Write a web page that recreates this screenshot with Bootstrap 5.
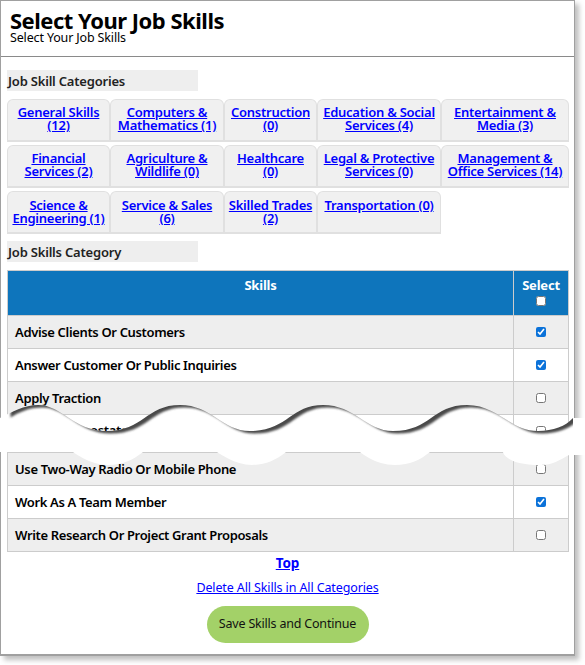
<!DOCTYPE html>
<html lang="en">
<head>
<meta charset="utf-8">
<title>Select Your Job Skills</title>
<link href="https://cdn.jsdelivr.net/npm/bootstrap@5.3.0/dist/css/bootstrap.min.css" rel="stylesheet">
<style>
html,body{background:#fff;overflow:hidden;height:665px}
body{font-family:"Noto Sans","Open Sans",sans-serif;color:#000;font-size:14px;position:relative}
.sheet{width:575px;height:656px;background:#fff;border:1px solid #a0a0a0;border-width:1px 1px 2px 1px;box-shadow:4px 4px 5px rgba(0,0,0,.25);overflow:hidden}
.head-box{height:56px;border-bottom:1px solid #8a8a8a;padding:7px 9px 0}
.page-title{font-size:22px;line-height:24px;font-weight:700;margin:0;letter-spacing:-.5px}
.page-sub{font-size:12.5px;line-height:12px;letter-spacing:-.15px}
.sec-label{width:191px;height:21px;background:#eee;font-size:13px;line-height:23px;font-weight:600;color:#222;padding-left:1px;margin-left:6px;letter-spacing:-.2px}
.first-label{margin-top:13px}
.second-label{margin-top:7px}
.tabs-box{display:grid;grid-template-columns:103px 114px 93px 124px 128px;margin:8px 0 0 6px;width:562px;row-gap:3px}
.tab-cell{background:#f0f0f0;border:1px solid #e0e0e0;border-bottom-width:2px;border-top-left-radius:6px;border-top-right-radius:6px;height:43px;text-align:center;font-size:13px;line-height:13px;font-weight:600;padding-top:6px;letter-spacing:-.25px}
.tab-cell:nth-child(n+11){padding-top:7px}
.tab-cell a{color:#00f}
.skill-table{width:562px;margin:8px 0 0 6px;border-collapse:collapse;table-layout:fixed}
.skill-table th,.skill-table td{border:1px solid #ccc;font-size:13px;font-weight:600}
.skill-table thead th{background:#0e75bc;color:#fff;height:45px;text-align:center;vertical-align:top;line-height:13px;padding-top:8px;font-weight:700;letter-spacing:-.2px}
.skill-table tbody td{height:33px;padding:2px 0 0 7px;vertical-align:middle;letter-spacing:-.35px}
.skill-table tbody tr:nth-child(odd) td{background:#eee}
.skill-table tbody td.pick{padding:0;text-align:center}
.skill-table .cut td{height:38px;padding:0 0 2px 7px;white-space:nowrap;overflow:hidden}
.skill-table .cut td.pick{padding:0 0 5px}
.sliver{display:inline-block}
.sliver-a{margin-left:10px;width:65px;vertical-align:-3px}
.sliver-b{width:78px}
.sliver-c{vertical-align:-3px}
.skill-table input{width:10px;height:10px;display:block;margin:0 auto;accent-color:#0b72d9}
.skill-table thead input{margin-top:4px}
.top-row{margin-top:2px;line-height:18px}
.del-row{margin-top:6px;line-height:18px}
.btn-row{margin-top:9px}
.top-link{font-weight:700;font-size:13.5px;color:#00f;letter-spacing:-.1px}
.del-link{color:#00f;font-size:12.5px;letter-spacing:-.12px}
.save-pill{background:#a3d168;color:#111;border:0;border-radius:19px;width:162px;height:37px;font-size:12.5px;letter-spacing:-.2px;padding:0}
.tear{position:absolute;left:0;top:400px;width:585px;height:72px}
</style>
</head>
<body>
<div class="sheet">
  <div class="head-box">
    <h1 class="page-title">Select Your Job Skills</h1>
    <div class="page-sub">Select Your Job Skills</div>
  </div>
  <div class="sec-label first-label">Job Skill Categories</div>
  <div class="tabs-box">
    <div class="tab-cell"><a href="#">General Skills<br>(12)</a></div>
    <div class="tab-cell"><a href="#">Computers &amp;<br>Mathematics (1)</a></div>
    <div class="tab-cell"><a href="#">Construction<br>(0)</a></div>
    <div class="tab-cell"><a href="#">Education &amp; Social<br>Services (4)</a></div>
    <div class="tab-cell"><a href="#">Entertainment &amp;<br>Media (3)</a></div>
    <div class="tab-cell"><a href="#">Financial<br>Services (2)</a></div>
    <div class="tab-cell"><a href="#">Agriculture &amp;<br>Wildlife (0)</a></div>
    <div class="tab-cell"><a href="#">Healthcare<br>(0)</a></div>
    <div class="tab-cell"><a href="#">Legal &amp; Protective<br>Services (0)</a></div>
    <div class="tab-cell"><a href="#">Management &amp;<br>Office Services (14)</a></div>
    <div class="tab-cell"><a href="#">Science &amp;<br>Engineering (1)</a></div>
    <div class="tab-cell"><a href="#">Service &amp; Sales<br>(6)</a></div>
    <div class="tab-cell"><a href="#">Skilled Trades<br>(2)</a></div>
    <div class="tab-cell"><a href="#">Transportation (0)</a></div>
  </div>
  <div class="sec-label second-label">Job Skills Category</div>
  <table class="skill-table">
    <colgroup><col><col style="width:55px"></colgroup>
    <thead><tr><th>Skills</th><th>Select<input type="checkbox" aria-label="Select all"></th></tr></thead>
    <tbody>
      <tr><td>Advise Clients Or Customers</td><td class="pick"><input type="checkbox" checked aria-label="Advise Clients Or Customers"></td></tr>
      <tr><td>Answer Customer Or Public Inquiries</td><td class="pick"><input type="checkbox" checked aria-label="Answer Customer Or Public Inquiries"></td></tr>
      <tr><td>Apply Traction</td><td class="pick"><input type="checkbox" aria-label="Apply Traction"></td></tr>
      <tr class="cut"><td aria-hidden="true"><span class="sliver sliver-a">Tl</span><span class="sliver sliver-b">ostate</span><span class="sliver sliver-c">Skills</span></td><td class="pick"><input type="checkbox" aria-label="Skill hidden by the tear"></td></tr>
      <tr><td>Use Two-Way Radio Or Mobile Phone</td><td class="pick"><input type="checkbox" aria-label="Use Two-Way Radio Or Mobile Phone"></td></tr>
      <tr><td>Work As A Team Member</td><td class="pick"><input type="checkbox" checked aria-label="Work As A Team Member"></td></tr>
      <tr><td>Write Research Or Project Grant Proposals</td><td class="pick"><input type="checkbox" aria-label="Write Research Or Project Grant Proposals"></td></tr>
    </tbody>
  </table>
  <div class="text-center top-row"><a class="top-link" href="#">Top</a></div>
  <div class="text-center del-row"><a class="del-link" href="#">Delete All Skills in All Categories</a></div>
  <div class="text-center btn-row"><button class="save-pill" type="button">Save Skills and Continue</button></div>
</div>
<svg class="tear" viewBox="0 0 585 72" aria-hidden="true">
  <defs>
    <filter id="sh" x="-5%" y="-50%" width="110%" height="200%"><feGaussianBlur stdDeviation="1.2"/></filter>
    <clipPath id="gap"><path d="M0 18C12 12 24 5 38 5C62 5 74 31 106 31C144 31 146 5 180 5C212 5 222 31 250 31C288 31 290 5 323 5C355 5 366 31 393 31C431 31 432 5 467 5C498 5 510 31 538 31C553 31 566 26 573 18V55H569C560 60 552 65 541 65C505 65 503 52 503 52H430C420 60 410 65 395 65C375 65 360 52 360 52H286C276 60 265 65 252 65C235 65 217 52 217 52H143C133 60 122 65 108 65C90 65 73 52 73 52H0Z"/></clipPath>
  </defs>
  <path d="M0 18C12 12 24 5 38 5C62 5 74 31 106 31C144 31 146 5 180 5C212 5 222 31 250 31C288 31 290 5 323 5C355 5 366 31 393 31C431 31 432 5 467 5C498 5 510 31 538 31C553 31 566 26 573 18H585V55H569C560 60 552 65 541 65C505 65 503 52 503 52H430C420 60 410 65 395 65C375 65 360 52 360 52H286C276 60 265 65 252 65C235 65 217 52 217 52H143C133 60 122 65 108 65C90 65 73 52 73 52H0V38H24V41H37V38H168V41H190V38H0Z" fill="#fff" fill-rule="evenodd"/>
  <g clip-path="url(#gap)">
    <path d="M6 15C14 10 24 5 38 5C62 5 74 31 106 31C144 31 146 5 180 5C212 5 222 31 250 31C288 31 290 5 323 5C355 5 366 31 393 31C431 31 432 5 467 5C498 5 510 31 538 31C553 31 566 26 573 18V-20H6Z" transform="translate(4.5 2.5)" fill="#484848" filter="url(#sh)"/>
  </g>
</svg>
</body>
</html>
